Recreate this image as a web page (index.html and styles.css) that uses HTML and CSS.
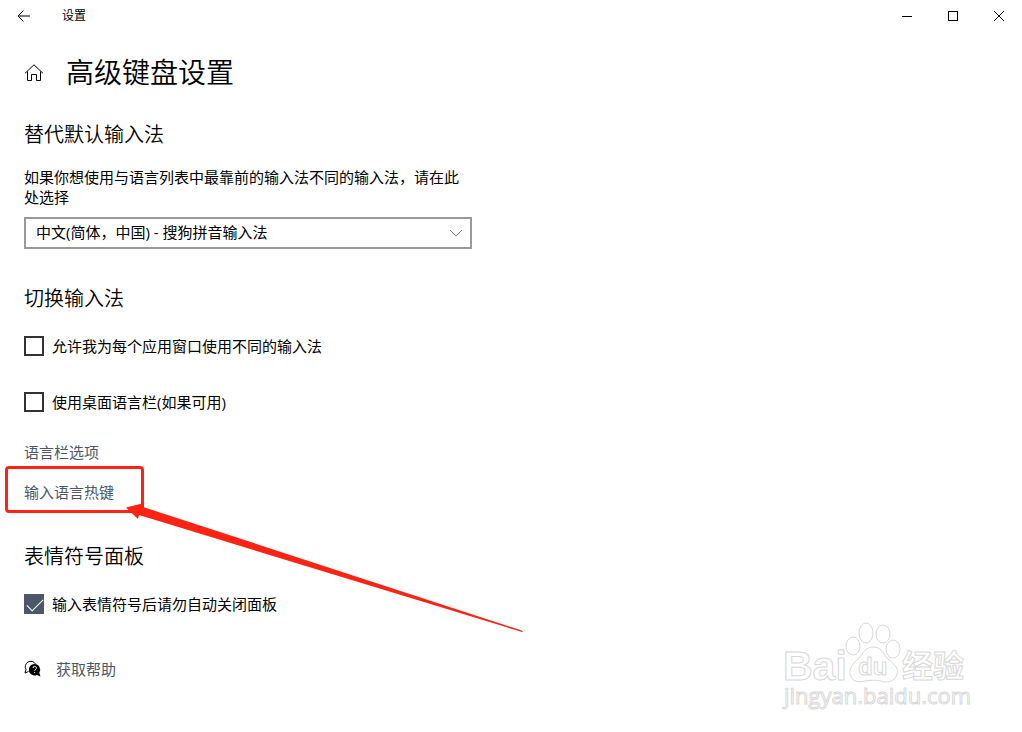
FILE: index.html
```html
<!DOCTYPE html>
<html lang="zh-CN">
<head>
    <meta charset="UTF-8">
    <meta name="viewport" content="width=device-width, initial-scale=1.0">
    <title>设置</title>
    <link rel="stylesheet" href="styles.css">
</head>
<body>
<div class="window">

    <!-- Title bar -->
    <header class="titlebar">
        <button class="back-btn" type="button" aria-label="返回">
            <svg width="14" height="12" viewBox="0 0 14 12"><path d="M6.500 .5 L1 6 L6.500 11.500 M1 6 H13" /></svg>
        </button>
        <span class="window-title">设置</span>
        <div class="window-controls">
            <button type="button" aria-label="最小化">
                <svg width="12" height="12" viewBox="0 0 12 12"><path d="M1 6.500 H11" /></svg>
            </button>
            <button type="button" aria-label="最大化">
                <svg width="12" height="12" viewBox="0 0 12 12"><rect x="1.500" y="1.500" width="9" height="9" /></svg>
            </button>
            <button type="button" aria-label="关闭">
                <svg width="12" height="12" viewBox="0 0 12 12"><path d="M1 1 L11 11 M11 1 L1 11" /></svg>
            </button>
        </div>
    </header>

    <main class="content">
        <div class="page-head">
            <svg class="home-icon" width="20" height="20" viewBox="0 0 20 20"><path d="M1 11.300 L10 2.800 L19 11.300 M3.500 9.500 V18.500 H7.500 V12.500 H12.500 V18.500 H16.500 V9.500" /></svg>
            <h1>高级键盘设置</h1>
        </div>

        <section>
            <h2>替代默认输入法</h2>
            <label class="hint" for="input-method">如果你想使用与语言列表中最靠前的输入法不同的输入法，请在此处选择</label>
            <div class="select-box">
                <select id="input-method">
                    <option>中文(简体，中国) - 搜狗拼音输入法</option>
                </select>
                <svg class="chevron" width="14" height="8" viewBox="0 0 14 8"><path d="M1 1 L7 7 L13 1" /></svg>
            </div>
        </section>

        <section>
            <h2>切换输入法</h2>
            <div class="options">
                <label class="check"><input type="checkbox">允许我为每个应用窗口使用不同的输入法</label>
                <label class="check"><input type="checkbox">使用桌面语言栏(如果可用)</label>
            </div>
            <div class="links">
                <a href="#">语言栏选项</a>
                <div class="marked">
                    <a href="#">输入语言热键</a>
                    <div class="mark-box"></div>
                    <svg class="mark-arrow" width="400" height="130" viewBox="0 0 400 130"><path d="M0 4.500 L18 0 L17 4 L397 128 L396 129 L13 12 L12 16 Z" /></svg>
                </div>
            </div>
        </section>

        <section>
            <h2>表情符号面板</h2>
            <label class="check"><input type="checkbox" checked>输入表情符号后请勿自动关闭面板</label>
        </section>

        <div class="help">
            <svg width="18" height="18" viewBox="0 0 18 18">
                <path class="bubble" d="M4.500 11.500 L1 13 L2 9.500 A5.200 5.200 0 1 1 11.500 4" />
                <path class="bubble-fill" d="M10.500 4 a5.700 5.700 0 1 0 2.300 10.900 L16.500 16.500 L15.300 12.800 A5.700 5.700 0 0 0 10.500 4 Z" />
                <path class="question" d="M9 8 a1.700 1.700 0 1 1 2.500 1.500 q-.8 .5 -.8 1.300 M10.700 12 V13" />
            </svg>
            <a href="#">获取帮助</a>
        </div>
    </main>

    <!-- Watermark -->
    <svg class="watermark" width="190" height="94" viewBox="0 0 190 94">
        <text class="wm-logo" x="1" y="60" font-size="41">Bai</text>
        <ellipse cx="71" cy="26" rx="7" ry="9" />
        <ellipse cx="84" cy="13" rx="7" ry="10" />
        <ellipse cx="101" cy="14" rx="7" ry="9" />
        <ellipse cx="111" cy="29" rx="7" ry="9" />
        <path d="M91 27 C100 27 101 34 106 39 C112 44 117 48 115 54 C113 62 105 63 99 61 C94 60 88 60 83 61 C76 63 69 61 68 54 C67 47 72 43 77 38 C81 33 84 27 91 27 Z" />
        <text class="wm-logo" x="76" y="55" font-size="24">du</text>
        <text class="wm-cjk" x="120" y="57" font-size="31">经验</text>
        <text class="wm-url" x="2" y="84" font-size="22">jingyan.baidu.com</text>
    </svg>
</div>
</body>
</html>
```
FILE: styles.css
```css
* {
    margin: 0;
    padding: 0;
    box-sizing: border-box;
}
body {
    background: #fff;
    color: #000;
    font-family: "Open Sans", "Noto Sans CJK SC", sans-serif;
    font-size: 15px;
    line-height: 20px;
}
button {
    border: none;
    background: none;
    cursor: pointer;
}
svg {
    display: block;
    fill: none;
    stroke: #000;
}
.window {
    position: relative;
    min-height: 100vh;
    overflow: hidden;
}

/* Title bar */
.titlebar {
    display: flex;
    align-items: center;
    height: 32px;
}
.back-btn {
    display: flex;
    justify-content: center;
    align-items: center;
    width: 48px;
    height: 32px;
}
.window-title {
    flex: 1;
    padding-left: 14px;
    font-size: 12px;
}
.window-controls {
    display: flex;
}
.window-controls button {
    display: flex;
    justify-content: center;
    align-items: center;
    width: 46px;
    height: 32px;
}

/* Page */
.content {
    padding: 20px 24px;
}
.page-head {
    display: flex;
    align-items: center;
    gap: 22px;
    margin-bottom: 29px;
}
h1 {
    font-size: 28px;
    font-weight: 350;
    line-height: 40px;
}
h2 {
    margin-bottom: 23px;
    font-size: 20px;
    font-weight: 350;
    line-height: 28px;
}
section {
    max-width: 448px;
    margin-bottom: 36px;
}
.hint {
    display: block;
    margin: -5px 0 10px;
}
.select-box {
    position: relative;
}
.select-box select {
    width: 100%;
    height: 32px;
    padding: 0 32px 2px 10px;
    border: 2px solid #999;
    border-radius: 0;
    background: #fff;
    color: #000;
    font: inherit;
    appearance: none;
}
.chevron {
    position: absolute;
    top: 12px;
    right: 9px;
    stroke: #777;
    pointer-events: none;
}

/* Check boxes */
.options {
    display: flex;
    flex-direction: column;
    gap: 36px;
    margin-bottom: 30px;
}
.check {
    display: flex;
    align-items: center;
    gap: 8px;
}
.check input {
    width: 20px;
    height: 20px;
    border: 2px solid #333;
    appearance: none;
}
.check input:checked {
    border: none;
    background: #4c5869;
}
.check input:checked::before {
    content: "";
    display: block;
    width: 15px;
    height: 7px;
    margin: 5px 0 0 3px;
    border: solid #fff;
    border-width: 0 0 1px 1px;
    transform: rotate(-45deg);
}

/* Links */
a {
    color: #4c5869;
    text-decoration: none;
}
a:hover {
    color: #999;
}
.links {
    display: flex;
    flex-direction: column;
    align-items: flex-start;
    gap: 20px;
    margin-bottom: 41px;
}
.marked {
    position: relative;
}
.mark-box {
    position: absolute;
    top: -16px;
    left: -19px;
    width: 139px;
    height: 47px;
    border: 3px solid #ff2314;
    border-radius: 4px;
    pointer-events: none;
}
.mark-arrow {
    position: absolute;
    top: 21px;
    left: 102px;
    fill: #ff2314;
    stroke: none;
    pointer-events: none;
}
.help {
    display: flex;
    align-items: center;
    gap: 14px;
    margin-top: 45px;
}
.help .bubble-fill {
    fill: #000;
    stroke: none;
}
.help .question {
    stroke: #fff;
}

/* Watermark */
.watermark {
    position: absolute;
    right: 50px;
    bottom: 18px;
    fill: #fff;
    stroke: #d8d8d8;
    pointer-events: none;
}
.wm-logo {
    font-family: "Liberation Sans", sans-serif;
    font-weight: 700;
}
.wm-cjk {
    font-family: "Noto Sans CJK SC", sans-serif;
    font-weight: 700;
}
.wm-url {
    font-family: "Open Sans", sans-serif;
}
```
